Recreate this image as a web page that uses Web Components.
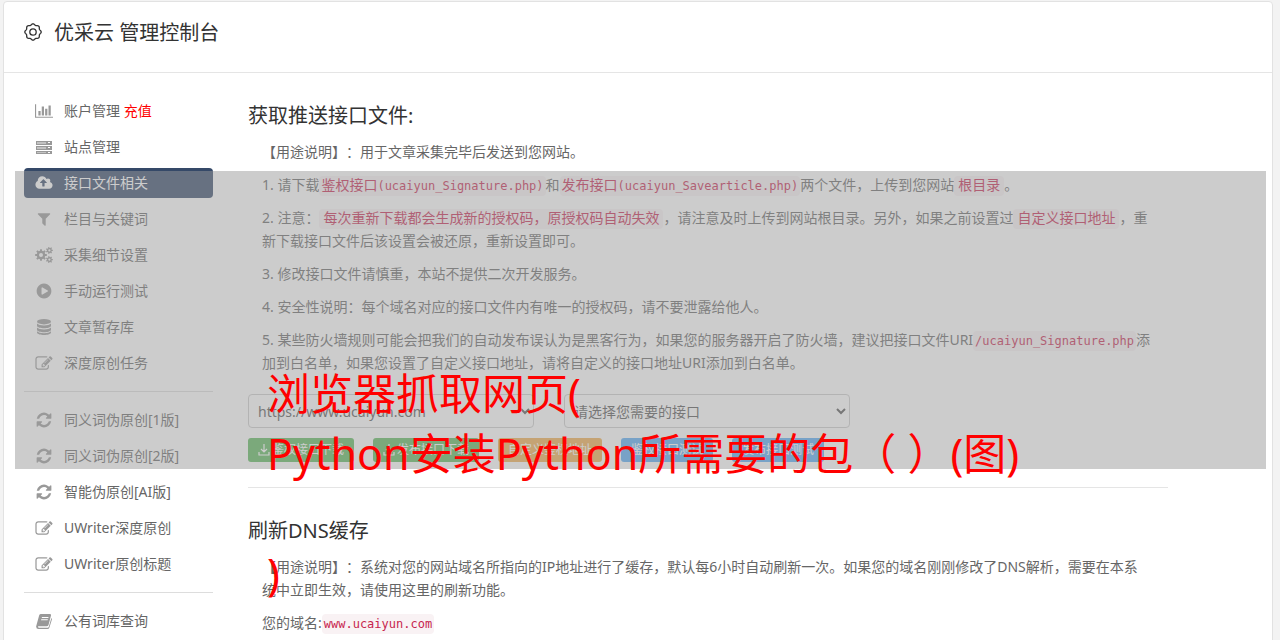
<!DOCTYPE html>
<html lang="zh-CN">
<head>
<meta charset="utf-8">
<title>优采云 管理控制台</title>
<style>
body { margin: 0; background: #f3f3f3; color: #666; font: 14px/23px "Noto Sans", "Noto Sans CJK SC", sans-serif; text-spacing-trim: space-all; }
</style>
</head>
<body>
<console-page>
  <console-header slot="header">优采云 管理控制台</console-header>
  <side-nav slot="nav">
    <nav-item icon="chart">账户管理 <span style="color:#f00">充值</span></nav-item>
    <nav-item icon="server">站点管理</nav-item>
    <nav-item icon="cloud" active>接口文件相关</nav-item>
    <nav-item icon="filter">栏目与关键词</nav-item>
    <nav-item icon="cogs">采集细节设置</nav-item>
    <nav-item icon="play">手动运行测试</nav-item>
    <nav-item icon="database">文章暂存库</nav-item>
    <nav-item icon="edit">深度原创任务</nav-item>
    <nav-divider></nav-divider>
    <nav-item icon="refresh">同义词伪原创[1版]</nav-item>
    <nav-item icon="refresh">同义词伪原创[2版]</nav-item>
    <nav-item icon="refresh">智能伪原创[AI版]</nav-item>
    <nav-item icon="edit">UWriter深度原创</nav-item>
    <nav-item icon="edit">UWriter原创标题</nav-item>
    <nav-divider></nav-divider>
    <nav-item icon="book">公有词库查询</nav-item>
  </side-nav>
  <doc-section heading="获取推送接口文件:">
    <doc-line>【用途说明】：用于文章采集完毕后发送到您网站。</doc-line>
    <doc-line>1. 请下载<code-tag compact><span>鉴权接口</span>(ucaiyun_Signature.php)</code-tag>和<code-tag compact><span>发布接口</span>(ucaiyun_Savearticle.php)</code-tag>两个文件，上传到您网站<code-tag><span>根目录</span></code-tag>。</doc-line>
    <doc-line>2. 注意：<code-tag><span>每次重新下载都会生成新的授权码，原授权码自动失效</span></code-tag>，请注意及时上传到网站根目录。另外，如果之前设置过<code-tag><span>自定义接口地址</span></code-tag>，重新下载接口文件后该设置会被还原，重新设置即可。</doc-line>
    <doc-line>3. 修改接口文件请慎重，本站不提供二次开发服务。</doc-line>
    <doc-line>4. 安全性说明：每个域名对应的接口文件内有唯一的授权码，请不要泄露给他人。</doc-line>
    <doc-line>5. 某些防火墙规则可能会把我们的自动发布误认为是黑客行为，如果您的服务器开启了防火墙，建议把接口文件URI<code-tag compact>/ucaiyun_Signature.php</code-tag>添加到白名单，如果您设置了自定义接口地址，请将自定义的接口地址URI添加到白名单。</doc-line>
    <interface-form slot="footer"></interface-form>
  </doc-section>
  <doc-section heading="刷新DNS缓存">
    <doc-line>【用途说明】：系统对您的网站域名所指向的IP地址进行了缓存，默认每6小时自动刷新一次。如果您的域名刚刚修改了DNS解析，需要在本系<br>统中立即生效，请使用这里的刷新功能。</doc-line>
    <doc-line>您的域名:<code-tag compact>www.ucaiyun.com</code-tag></doc-line>
  </doc-section>
  <caption-band slot="overlay">浏览器抓取网页(
Python安装Python所需要的包（ ）(图)

)</caption-band>
</console-page>

<script>
function component(name, html, setup) {
  const tpl = document.createElement('template');
  tpl.innerHTML = html;
  customElements.define(name, class extends HTMLElement {
    constructor() {
      super();
      this.attachShadow({ mode: 'open' }).append(tpl.content.cloneNode(true));
    }
    connectedCallback() { if (setup) setup(this, this.shadowRoot); }
  });
}

// Toothed wheel outline with flat tooth tops.
function gear(cx, cy, inner, outer, teeth) {
  const step = Math.PI * 2 / teeth, pts = [];
  for (let i = 0; i < teeth; i++) {
    for (const [r, k] of [[inner, -.3], [outer, -.2], [outer, .2], [inner, .3]]) {
      const a = (i + k) * step;
      pts.push((cx + r * Math.cos(a)).toFixed(2) + ' ' + (cy + r * Math.sin(a)).toFixed(2));
    }
  }
  return 'M' + pts.join('L') + 'Z';
}
// Round-lobed wheel outline: the radius follows a cosine wave.
function scallop(cx, cy, radius, wave, lobes) {
  const pts = [];
  for (let d = 0; d < 360; d += 5) {
    const a = d * Math.PI / 180, r = radius + wave * Math.cos(a * lobes);
    pts.push((cx + r * Math.cos(a)).toFixed(2) + ' ' + (cy + r * Math.sin(a)).toFixed(2));
  }
  return 'M' + pts.join('L') + 'Z';
}
function ring(cx, cy, r) {
  return `M${cx - r} ${cy}a${r} ${r} 0 1 0 ${2 * r} 0a${r} ${r} 0 1 0 ${-2 * r} 0Z`;
}

const ICONS = {
  chart: ['0 0 2048 1792', '<path d="M640 896v512H384V896h256zm384-512v1024H768V384h256zm1024 1152v128H0V128h128v1408h1920zm-640-896v768h-256V640h256zm384-384v1152h-256V256h256z"/>'],
  server: ['0 0 18 16', '<path fill-rule="evenodd" d="M1 2h16v4H1zM13 3v1h2V3zM1 7h16v4H1zM13 8v1h2V8zM1 12h16v3H1zM13 13v1h2v-1z"/><path fill="#fff" opacity=".4" d="M2 3h9v2H2zM2 8h9v2H2zM2 13h9v1H2z"/>'],
  cloud: ['0 0 1920 1792', '<path d="M1280 864q0-14-9-23L919 489q-9-9-23-9t-23 9L522 840q-10 12-10 24 0 14 9 23t23 9h224v352q0 13 9.500 22.500t22.500 9.500h192q13 0 22.500-9.500t9.500-22.500V896h224q13 0 22.500-9.500T1280 864zm640 288q0 159-112.500 271.500T1536 1536H448q-185 0-316.500-131.500T0 1088q0-130 70-240t188-165q-2-30-2-43 0-212 150-362t362-150q156 0 285.500 87T1242 446q71-62 166-62 106 0 181 75t75 181q0 76-41 138 130 31 213.500 135.500T1920 1152z"/>'],
  filter: ['0 0 1792 1792', '<path d="M1595 295q17 41-14 70l-493 493v742q0 42-39 59-13 5-25 5-27 0-45-19l-256-256q-19-19-19-45V858L211 365q-31-29-14-70 17-39 59-39h1280q42 0 59 39z"/>'],
  cogs: ['0 0 18 16', `<path fill-rule="evenodd" d="${gear(6, 8, 4.3, 5.9, 8)}${ring(6, 8, 2)}${gear(14.4, 3.4, 2.5, 3.5, 7)}${ring(14.4, 3.4, 1.1)}${gear(14.4, 12.6, 2.5, 3.5, 7)}${ring(14.4, 12.6, 1.1)}"/>`],
  play: ['64 64 1664 1664', '<path d="M896 128q209 0 385.500 103T1561 510.500 1664 896t-103 385.500-279.500 279.500T896 1664t-385.500-103T231 1281.500 128 896t103-385.500T510.500 231 896 128zm384 823q32-18 32-55t-32-55L736 521q-31-19-64-1-32 19-32 56v640q0 37 32 56 16 8 32 8 17 0 32-9z"/>'],
  database: ['0 0 16 16', '<ellipse cx="8" cy="2.700" rx="7" ry="2.700"/><path d="M1 4.500c2 2.500 12 2.500 14 0V7c-1 3-13 3-14 0zM1 8.500c2 2.500 12 2.500 14 0V11c-1 3-13 3-14 0zM1 12.300c2 2.500 12 2.500 14 0v1.400c-1 3-13 3-14 0z"/>'],
  edit: ['0 0 1792 1664', '<path d="M888 1184l116-116-152-152-116 116v56h96v96h56zm440-720q-16-16-33 1L945 815q-17 17-1 33t33-1l350-350q17-17 1-33zm80 594v190q0 119-84.500 203.500T1120 1536H288q-119 0-203.500-84.500T0 1248V416q0-119 84.500-203.500T288 128h832q63 0 117 25 15 7 18 23 3 17-9 29l-49 49q-14 14-32 8-23-6-45-6H288q-66 0-113 47t-47 113v832q0 66 47 113t113 47h832q66 0 113-47t47-113v-126q0-13 9-22l64-64q15-15 35-7t20 29zm-96-738l288 288-672 672H640V992zm444 132l-92 92-288-288 92-92q28-28 68-28t68 28l152 152q28 28 28 68t-28 68z"/>'],
  refresh: ['64 64 1664 1664', '<path d="M1639 1056q0 5-1 7-64 268-268 434.500T892 1664q-146 0-282.500-55T366 1452l-129 129q-19 19-45 19t-45-19-19-45v-448q0-26 19-45t45-19h448q26 0 45 19t19 45-19 45l-137 137q71 66 161 102t187 36q134 0 250-65t186-179q11-17 53-117 8-23 30-23h192q13 0 22.500 9.500t9.500 22.500zm25-800v448q0 26-19 45t-45 19h-448q-26 0-45-19t-19-45 19-45l138-138Q1097 384 896 384q-134 0-250 65T460 628q-11 17-53 117-8 23-30 23H178q-13 0-22.500-9.500T146 736v-7q65-268 270-434.500T896 128q146 0 284 55.500T1425 340l130-129q19-19 45-19t45 19 19 45z"/>'],
  book: ['0 0 16 16', '<path fill-rule="evenodd" d="M5 1h9q1.500 0 1 1.500L12.500 12q-.5 1.300-2 1.300H2.600q-.8 0-.6.8.200.600 1 .600h8.600q.9 0 1.200-.9L15.400 5q.9.500.5 1.600L13.400 14.500q-.5 1.500-2 1.500H2.500Q.2 16 .1 13.500L3.200 2.300Q3.600 1 5 1zM6 4l-.3 1h6.600l.3-1zm-.7 2.300-.3 1h6.600l.3-1z"/>'],
  settings: ['0 0 18 18', `<g fill="none" stroke="currentColor" stroke-width="1.300"><path d="${scallop(9, 8, 7.6, .6, 8)}"/><circle cx="9" cy="8" r="3.200"/></g>`],
  download: ['0 0 12 12', '<path fill="none" stroke="currentColor" stroke-width="1.200" d="M6 0v8M3 5l3 3 3-3M1 8v3h10V8"/>']
};

customElements.define('app-icon', class extends HTMLElement {
  static observedAttributes = ['name'];
  constructor() {
    super();
    this.attachShadow({ mode: 'open' }).innerHTML = `<style>
  :host { display: inline-flex; width: 18px; height: 16px; flex: none; }
  svg { width: 100%; height: 100%; fill: currentColor; overflow: visible; }
</style><svg aria-hidden="true"></svg>`;
  }
  attributeChangedCallback(attr, before, name) {
    const [box, art] = ICONS[name];
    const svg = this.shadowRoot.querySelector('svg');
    svg.setAttribute('viewBox', box);
    svg.innerHTML = art;
  }
});

component('console-page', `<style>
  :host { display: block; position: relative; padding: 1px 7px 0 3px; }
  .card { background: #fff; border: 1px solid #e2e2e2; border-radius: 4px; }
  .body { display: grid; grid-template-columns: 189px minmax(0, 920px); column-gap: 35px; padding: 23px 20px 20px; }
</style>
<div class="card"><slot name="header"></slot>
<div class="body"><slot name="nav"></slot><main><slot></slot></main></div></div>
<slot name="overlay"></slot>`);

component('console-header', `<style>
  :host { display: block; border-bottom: 1px solid #e5e5e5; }
  h1 { display: flex; align-items: center; gap: 12px; height: 70px; box-sizing: border-box; margin: 0; padding: 0 20px 8px; color: #333; font-size: 20px; font-weight: 400; line-height: 28px; }
  app-icon { width: 18px; height: 18px; }
</style><header><h1><app-icon name="settings"></app-icon><span><slot></slot></span></h1></header>`);

component('side-nav', `<style>
  :host { display: block; }
  nav { display: flex; flex-direction: column; gap: 6px; }
</style><nav><slot></slot></nav>`);

component('nav-item', `<style>
  :host { display: block; }
  a { display: flex; align-items: center; gap: 11px; height: 30px; box-sizing: border-box; padding: 0 11px; border-radius: 4px; color: #666; text-decoration: none; white-space: nowrap; }
  span { padding-bottom: 2px; }
  app-icon { color: #999; }
  :host([active]) a, :host([active]) app-icon { color: #fff; }
  :host([active]) a { background: #354968; }
</style><a href="#"><app-icon></app-icon><span><slot></slot></span></a>`, (el, root) => {
  root.querySelector('app-icon').setAttribute('name', el.getAttribute('icon'));
  if (el.hasAttribute('active')) root.querySelector('a').setAttribute('aria-current', 'page');
});

component('nav-divider', `<style>
  :host { display: block; height: 1px; margin: 7px 0; background: #ddd; }
</style>`);

component('doc-section', `<style>
  :host { display: block; }
  :host(:not(:last-of-type)) section { padding-bottom: 25px; border-bottom: 1px solid #e5e5e5; margin-bottom: 23px; }
  h2 { margin: 0; padding-top: 6px; color: #333; font-size: 20px; font-weight: 400; line-height: 28px; }
  .lines { display: flex; flex-direction: column; gap: 10px; padding: 10px 16px 0 14px; }
</style><section><h2></h2><div class="lines"><slot></slot></div><slot name="footer"></slot></section>`, (el, root) => {
  root.querySelector('h2').textContent = el.getAttribute('heading');
});

component('doc-line', `<style>
  :host { display: block; }
  p { margin: 0; }
</style><p><slot></slot></p>`);

component('code-tag', `<style>
  :host { display: inline; }
  code { padding: 3px 4px; border-radius: 4px; background: #f9f2f4; color: #c7254e; font: 12px/12px "DejaVu Sans Mono", "Noto Sans CJK SC", monospace; }
  :host([compact]) code { padding: 3px 2px; }
  ::slotted(span) { font-size: 14px; }
</style><code><slot></slot></code>`);

component('action-button', `<style>
  :host { display: block; }
  button { display: flex; align-items: center; gap: 2px; height: 24px; padding: 0 10px; border: 0; border-radius: 3px; background: #5cb85c; color: #fff; font: inherit; font-size: 12px; line-height: 18px; white-space: nowrap; }
  :host([tone=warning]) button { background: #f0ad4e; }
  :host([tone=info]) button { background: #57abf5; }
  app-icon { width: 12px; height: 12px; }
</style><button type="button"><slot></slot></button>`, (el, root) => {
  if (el.hasAttribute('download')) {
    const icon = document.createElement('app-icon');
    icon.setAttribute('name', 'download');
    root.querySelector('button').prepend(icon);
  }
});

component('interface-form', `<style>
  :host { display: block; padding-top: 20px; }
  .fields { display: grid; grid-template-columns: repeat(2, 286px); gap: 30px; }
  select { width: 100%; height: 34px; padding: 0 5px; border: 1px solid #ccc; border-radius: 4px; background: #fff; color: #555; font: inherit; }
  .actions { display: flex; gap: 19px; padding-top: 10px; }
</style>
<form><div class="fields">
<select aria-label="网站域名"><option>https://www.ucaiyun.com</option></select>
<select aria-label="接口"><option>请选择您需要的接口</option></select>
</div><div class="actions">
<action-button download>鉴权接口下载</action-button>
<action-button download>发布接口下载</action-button>
<action-button tone="warning">自定义鉴权地址</action-button>
<action-button tone="info">鉴权接口测试</action-button>
<action-button tone="info">发布接口测试</action-button>
</div></form>`);

component('caption-band', `<style>
  :host { display: block; position: absolute; top: 171px; left: 15px; right: 14px; height: 298px; background: rgba(153, 153, 153, .5); pointer-events: none; }
  p { margin: 0; padding: 193px 0 0 252px; color: #f00; font-size: 43px; line-height: 60px; white-space: pre; }
</style><p><slot></slot></p>`);
</script>
</body>
</html>
